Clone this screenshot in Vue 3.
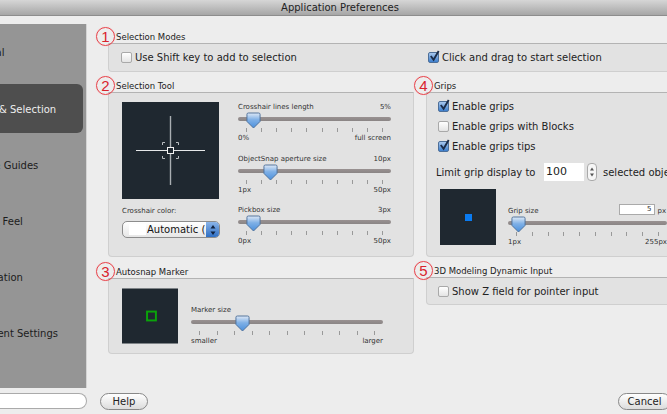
<script setup>
const sliders = [
  { label: 'Crosshair lines length', value: '5%', min: '0%', max: 'full screen', pos: 15 },
  { label: 'ObjectSnap aperture size', value: '10px', min: '1px', max: '50px', pos: 32.5 },
  { label: 'Pickbox size', value: '3px', min: '0px', max: '50px', pos: 15.5 },
]
const navItems = [
  { label: 'General', offset: -35 },
  { label: 'Cursor & Selection', offset: -37, active: true },
  { label: 'Units & Guides', offset: -36 },
  { label: 'Look & Feel', offset: -35 },
  { label: 'Application', offset: -33 },
  { label: 'Document Settings', offset: -38 },
]
const ticks10 = Array.from({ length: 10 })
const ticks11 = Array.from({ length: 11 })
</script>

<template>
  <div class="app">
    <div class="title">Application Preferences</div>

    <div class="body">
      <nav class="side">
        <div v-for="item in navItems" :key="item.label" class="nav" :class="{ active: item.active }">
          <span :style="{ marginLeft: item.offset + 'px' }">{{ item.label }}</span>
        </div>
      </nav>

      <main class="main">
        <section class="group modes">
          <span class="num">1</span>
          <h3 class="legend">Selection Modes</h3>
          <div class="box modes-box">
            <label class="check modes-left"><i class="cb"></i>Use Shift key to add to selection</label>
            <label class="check">
              <i class="cb on"><svg viewBox="0 0 14 14" class="tick"><path d="M3 6.5 6 10.5 11.5 1" /></svg></i>
              Click and drag to start selection
            </label>
          </div>
        </section>

        <div class="columns">
          <div class="col left">
            <section class="group">
              <span class="num">2</span>
              <h3 class="legend">Selection Tool</h3>
              <div class="box tool-box">
                <div class="tool-left">
                  <svg class="preview big" viewBox="0 0 97 97">
                    <rect width="97" height="97" fill="#1f2830" />
                    <path d="M48.5 14V83" stroke="#a9aeb2" stroke-width="1.4" />
                    <path d="M14 48.5H83" stroke="#e6e8e9" stroke-width="1" />
                    <rect x="45.5" y="45.5" width="6" height="6" fill="#1f2830" stroke="#f2f2f2" />
                    <path d="M40.5 43V40.5H43M54 40.5H56.5V43M56.5 54V56.5H54M43 56.5H40.5V54" fill="none" stroke="#b9bdc0" />
                  </svg>
                  <div class="small color-label">Crosshair color:</div>
                  <div class="select">
                    <i class="swatch"></i>
                    <span class="select-text">Automatic (</span>
                    <span class="select-arrows"><svg viewBox="0 0 8 12" width="8" height="12"><path d="M4 1 6.5 4.5H1.5ZM4 11 1.5 7.5H6.5Z" fill="#10223f" /></svg></span>
                  </div>
                </div>
                <div class="tool-right">
                  <div v-for="s in sliders" :key="s.label" class="slider">
                    <div class="row small"><span>{{ s.label }}</span><span>{{ s.value }}</span></div>
                    <div class="track">
                      <svg class="thumb" :style="{ left: s.pos + 'px' }" viewBox="0 0 16 18">
                        <defs><linearGradient id="tg" x1="0" y1="0" x2="0" y2="1"><stop offset="0" stop-color="#dfe9f6" /><stop offset=".45" stop-color="#7fb0e6" /><stop offset="1" stop-color="#4a8fdc" /></linearGradient></defs>
                        <path d="M2.5 1H13.5Q15 1 15 2.5V10L8 17 1 10V2.5Q1 1 2.5 1Z" fill="url(#tg)" stroke="#4d6f99" />
                      </svg>
                    </div>
                    <div class="ticks t10"><i v-for="(_, n) in ticks10" :key="n"></i></div>
                    <div class="row small"><span>{{ s.min }}</span><span>{{ s.max }}</span></div>
                  </div>
                </div>
              </div>
            </section>

            <section class="group auto">
              <span class="num">3</span>
              <h3 class="legend">Autosnap Marker</h3>
              <div class="box auto-box">
                <svg class="preview mid" viewBox="0 0 57 56">
                  <rect width="57" height="56" fill="#1f2830" />
                  <rect x="25.5" y="23.5" width="9" height="9" fill="none" stroke="#0aa30a" stroke-width="2" />
                </svg>
                <div class="slider auto-slider">
                  <div class="row small"><span>Marker size</span></div>
                  <div class="track">
                    <svg class="thumb thumb-auto" viewBox="0 0 16 18">
                      <path d="M2.5 1H13.5Q15 1 15 2.5V10L8 17 1 10V2.5Q1 1 2.5 1Z" fill="url(#tg)" stroke="#4d6f99" />
                    </svg>
                  </div>
                  <div class="ticks t11"><i v-for="(_, n) in ticks11" :key="n"></i></div>
                  <div class="row small"><span>smaller</span><span>larger</span></div>
                </div>
              </div>
            </section>
          </div>

          <div class="col right">
            <section class="group">
              <span class="num">4</span>
              <h3 class="legend">Grips</h3>
              <div class="box grips-box">
                <label class="check"><i class="cb on"><svg viewBox="0 0 14 14" class="tick"><path d="M3 6.5 6 10.5 11.5 1" /></svg></i>Enable grips</label>
                <label class="check"><i class="cb"></i>Enable grips with Blocks</label>
                <label class="check"><i class="cb on"><svg viewBox="0 0 14 14" class="tick"><path d="M3 6.5 6 10.5 11.5 1" /></svg></i>Enable grips tips</label>
                <div class="limit">
                  <span class="limit-label">Limit grip display to</span>
                  <span class="field">100</span>
                  <span class="stepper"><svg viewBox="0 0 10 18" width="10" height="18"><path d="M5 3.5 7.5 7H2.5ZM5 14.5 2.5 11H7.5Z" fill="#555" /></svg></span>
                  <span>selected objects</span>
                </div>
                <div class="grip-row">
                  <svg class="preview mid" viewBox="0 0 56 56">
                    <rect width="56" height="56" fill="#1f2830" />
                    <rect x="25" y="25" width="7" height="7" fill="#0a7bf0" />
                  </svg>
                  <div class="slider grip-slider">
                    <div class="row small grip-head">
                      <span>Grip size</span>
                      <span class="size-field">5</span>
                      <span class="px">px</span>
                    </div>
                    <div class="track">
                      <svg class="thumb thumb-grip" viewBox="0 0 16 18">
                        <path d="M2.5 1H13.5Q15 1 15 2.5V10L8 17 1 10V2.5Q1 1 2.5 1Z" fill="url(#tg)" stroke="#4d6f99" />
                      </svg>
                    </div>
                    <div class="ticks t10"><i v-for="(_, n) in ticks10" :key="n"></i></div>
                    <div class="row small"><span>1px</span><span>255px</span></div>
                  </div>
                </div>
              </div>
            </section>

            <section class="group z-group">
              <span class="num">5</span>
              <h3 class="legend">3D Modeling Dynamic Input</h3>
              <div class="box z-box">
                <label class="check"><i class="cb"></i>Show Z field for pointer input</label>
              </div>
            </section>
          </div>
        </div>
      </main>
    </div>

    <footer class="foot">
      <div class="search"></div>
      <button class="btn help">Help</button>
      <button class="btn cancel">Cancel</button>
    </footer>
  </div>
</template>

<style>
html, body { margin: 0; overflow: hidden; background: #ededed; }
</style>

<style scoped>
.app {
  width: 667px;
  height: 414px;
  overflow: hidden;
  background: #ededed;
  font-family: "DejaVu Sans", sans-serif;
  font-size: 10px;
  color: #222;
  display: flex;
  flex-direction: column;
}
.title {
  height: 15px;
  flex: none;
  padding-left: 13px;
  background: linear-gradient(#d6d6d6, #a6a6a6);
  border-bottom: 1px solid #8d8d8d;
  text-align: center;
  line-height: 15px;
  font-size: 10px;
  color: #222;
}
.body {
  height: 372px;
  flex: none;
  display: flex;
}
.side {
  width: 87px;
  flex: none;
  margin-top: 8px;
  background: #959595;
  border-right: 1px solid #d4d4d4;
  box-sizing: border-box;
  overflow: hidden;
  padding-top: 4px;
}
.nav {
  height: 49px;
  margin: 0 3px 7px 0;
  display: flex;
  align-items: center;
  white-space: nowrap;
  color: #1c1c1c;
}
.nav + .nav { padding-top: 2px; box-sizing: border-box; }
.nav.active {
  background: #4e4e4e;
  border-radius: 0 6px 6px 0;
  color: #eee;
}
.main {
  width: 620px;
  flex: none;
  margin-left: 21px;
  padding-top: 15px;
}
.group { position: relative; }
.num {
  position: absolute;
  left: -12px;
  top: -4px;
  width: 17px;
  height: 17px;
  border: 1px solid #e8434b;
  border-radius: 50%;
  box-shadow: 0 0 1px #f3a0a4;
  color: #d9232d;
  font-size: 15px;
  line-height: 17px;
  text-align: center;
  font-family: "Liberation Sans", sans-serif;
}
.legend {
  margin: 0;
  height: 12px;
  padding-left: 8px;
  font-weight: 400;
  font-size: 8.5px;
  line-height: 12px;
  color: #222;
}
.box {
  background: #e2e2e2;
  border: 1px solid #cfcfcf;
  border-top-color: #b3b3b3;
  border-radius: 0 0 4px 4px;
  box-sizing: border-box;
}
.modes { margin-bottom: 8px; }
.modes-box {
  height: 29px;
  padding-left: 12px;
  display: flex;
  align-items: center;
}
.modes-left { width: 307px; }
.check {
  display: flex;
  align-items: center;
  height: 20px;
  white-space: nowrap;
  color: #222;
}
.cb {
  width: 11px;
  height: 11px;
  flex: none;
  margin-right: 3px;
  box-sizing: border-box;
  border: 1px solid #a9a9a9;
  border-radius: 2px;
  background: linear-gradient(#fff, #e4e4e4);
  position: relative;
}
.cb.on {
  background: linear-gradient(#a8c8ee, #3d7fce);
  border-color: #4d6f99;
}
.tick {
  position: absolute;
  left: -1px;
  top: -3px;
  width: 13px;
  height: 13px;
  fill: none;
  stroke: #1b2c48;
  stroke-width: 2;
}
.columns {
  display: flex;
  gap: 12px;
}
.col.left { width: 306px; flex: none; }
.col.right { width: 300px; flex: none; }
.auto { margin-top: 9px; }
.z-group { margin-top: 8px; }
.tool-box {
  height: 165px;
  padding: 9px 22px 0 13px;
  display: flex;
  gap: 18px;
}
.tool-left { width: 98px; flex: none; }
.preview { display: block; flex: none; }
.big { width: 97px; height: 97px; }
.mid { width: 56px; height: 56px; }
.small { font-size: 7px; color: #333; }
.color-label { margin-top: 8px; height: 9px; line-height: 9px; }
.select {
  margin-top: 5px;
  height: 17px;
  display: flex;
  align-items: center;
  box-sizing: border-box;
  border: 1px solid #8c8c8c;
  border-radius: 5px;
  background: linear-gradient(#fff, #e6e6e6);
  overflow: hidden;
  font-size: 10px;
  color: #111;
}
.swatch { width: 17px; height: 11px; margin: 0 1px 0 6px; background: #fff; flex: none; }
.select-text { flex: 1; white-space: nowrap; overflow: hidden; }
.select-arrows {
  width: 13px;
  align-self: stretch;
  flex: none;
  display: flex;
  align-items: center;
  justify-content: center;
  background: linear-gradient(#8ab4e8, #2f6fc4);
}
.tool-right { flex: 1; }
.slider { width: 153px; }
.slider + .slider { margin-top: 10.5px; }
.row {
  display: flex;
  justify-content: space-between;
  height: 10px;
  line-height: 10px;
}
.track {
  position: relative;
  margin-top: 5px;
  height: 4px;
  border-radius: 2px;
  background: linear-gradient(#999191, #8a8585);
}
.thumb {
  position: absolute;
  top: -5px;
  width: 15px;
  height: 17px;
  margin-left: -7.5px;
}
.thumb-auto { left: 51px; }
.thumb-grip { left: 10px; }
.ticks {
  display: flex;
  justify-content: space-between;
  margin-top: 7px;
  padding: 0 8px;
  height: 5px;
}
.ticks i { width: 1px; height: 4px; background: #999; }
.auto-box {
  height: 76px;
  padding: 9px 0 0 13px;
  display: flex;
  gap: 13px;
}
.auto-slider { width: 192px; padding-top: 17px; }
.grips-box {
  height: 165px;
  padding: 3px 0 0 11px;
}
.limit {
  display: flex;
  align-items: center;
  margin: 6px 0 0 -2px;
  height: 20px;
  white-space: nowrap;
}
.limit-label { width: 108px; flex: none; }
.field {
  width: 40px;
  height: 18px;
  background: #fff;
  font-size: 11px;
  line-height: 18px;
  padding-left: 2px;
  box-sizing: border-box;
  flex: none;
}
.stepper {
  width: 10px;
  height: 18px;
  margin: 0 6px 0 3px;
  border: 1px solid #aaa;
  border-radius: 4px;
  box-sizing: border-box;
  background: #f6f6f6;
  display: flex;
  align-items: center;
  justify-content: center;
  overflow: hidden;
  flex: none;
}
.grip-row {
  display: flex;
  gap: 12px;
  margin: 7px 0 0 2px;
}
.grip-slider { width: 159px; padding-top: 17px; }
.grip-slider .track { margin-top: 5px; }
.grip-slider .ticks { margin-top: 7px; }
.grip-head { justify-content: flex-start; position: relative; }
.size-field {
  margin-left: 80px;
  width: 36px;
  height: 11px;
  background: #fff;
  border: 1px solid #aaa;
  box-sizing: border-box;
  text-align: right;
  padding-right: 2px;
  line-height: 9px;
  flex: none;
  position: relative;
  top: -2px;
}
.px { margin-left: 3px; }
.z-box {
  height: 28px;
  padding-left: 11px;
  display: flex;
  align-items: center;
}
.foot {
  flex: 1;
  display: flex;
  align-items: center;
}
.search {
  width: 87px;
  height: 16px;
  box-sizing: border-box;
  border: 1px solid #aaa;
  border-left: 0;
  border-radius: 0 8px 8px 0;
  background: #fff;
  flex: none;
}
.btn {
  height: 17px;
  padding: 0;
  border: 1px solid #888;
  border-radius: 9px;
  background: linear-gradient(#fff, #dcdcdc);
  font-family: inherit;
  font-size: 10px;
  color: #222;
  box-sizing: border-box;
  flex: none;
}
.help { width: 48px; margin-left: 13px; }
.cancel { width: 53px; margin-left: 470px; }
</style>
